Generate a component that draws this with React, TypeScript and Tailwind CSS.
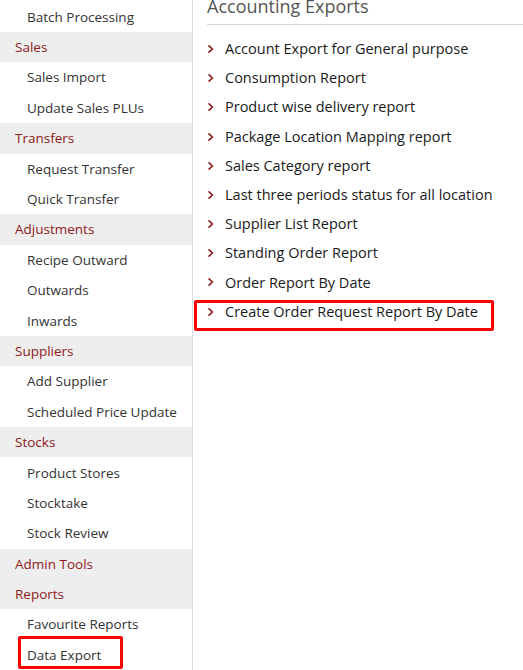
import React from 'react';

type NavEntry = { label: string; header?: boolean; marked?: boolean };

const nav: NavEntry[] = [
  { label: 'Batch Processing' },
  { label: 'Sales', header: true },
  { label: 'Sales Import' },
  { label: 'Update Sales PLUs' },
  { label: 'Transfers', header: true },
  { label: 'Request Transfer' },
  { label: 'Quick Transfer' },
  { label: 'Adjustments', header: true },
  { label: 'Recipe Outward' },
  { label: 'Outwards' },
  { label: 'Inwards' },
  { label: 'Suppliers', header: true },
  { label: 'Add Supplier' },
  { label: 'Scheduled Price Update' },
  { label: 'Stocks', header: true },
  { label: 'Product Stores' },
  { label: 'Stocktake' },
  { label: 'Stock Review' },
  { label: 'Admin Tools', header: true },
  { label: 'Reports', header: true },
  { label: 'Favourite Reports' },
  { label: 'Data Export', marked: true },
];

const exportsList = [
  'Account Export for General purpose',
  'Consumption Report',
  'Product wise delivery report',
  'Package Location Mapping report',
  'Sales Category report',
  'Last three periods status for all location',
  'Supplier List Report',
  'Standing Order Report',
  'Order Report By Date',
  'Create Order Request Report By Date',
];

const Chevron = () => (
  <svg width="7" height="10" viewBox="0 0 7 10" className="shrink-0">
    <polyline points="1.5,1.3 5.4,5 1.5,8.7" fill="none" stroke="#8b1c1c" strokeWidth="1.6" />
  </svg>
);

const App = () => {
  return (
    <div
      className="flex h-[670px] w-[523px] overflow-hidden bg-white"
      style={{ fontFamily: '"Open Sans", "Liberation Sans", sans-serif' }}
    >
      <aside className="w-[193px] shrink-0 border-r border-[#dddddd] pt-[1.6px]">
        {nav.map((item) =>
          item.header ? (
            <div
              key={item.label}
              className="flex h-[30.4px] items-center bg-[#eeeeee] pl-[15px] text-[13.5px] text-[#8f1a1a]"
            >
              {item.label}
            </div>
          ) : (
            <div
              key={item.label}
              className="relative flex h-[30.4px] items-center pl-[27px] text-[13.5px] text-[#333333]"
            >
              {item.label}
              {item.marked && (
                <span className="absolute left-[18px] top-[-4px] h-[33px] w-[105px] rounded-[2px] border-[3px] border-[#ff0000]" />
              )}
            </div>
          )
        )}
      </aside>

      <main className="flex-1 pl-[14px]">
        <h2 className="mt-[-7px] border-b border-[#d6d6d6] pb-[5px] text-[18px] leading-[26px] text-[#555555]">
          Accounting Exports
        </h2>
        <ul className="mt-[9.4px]">
          {exportsList.map((label, i) => (
            <li
              key={label}
              className="relative flex h-[29.2px] items-center gap-[11px] text-[14.5px] text-[#1a1a1a]"
            >
              <Chevron />
              <span>{label}</span>
              {i === exportsList.length - 1 && (
                <span className="absolute left-[-13px] top-[2.5px] h-[31px] w-[300px] rounded-[2px] border-[3px] border-[#ff0000]" />
              )}
            </li>
          ))}
        </ul>
      </main>
    </div>
  );
};

export default App;
